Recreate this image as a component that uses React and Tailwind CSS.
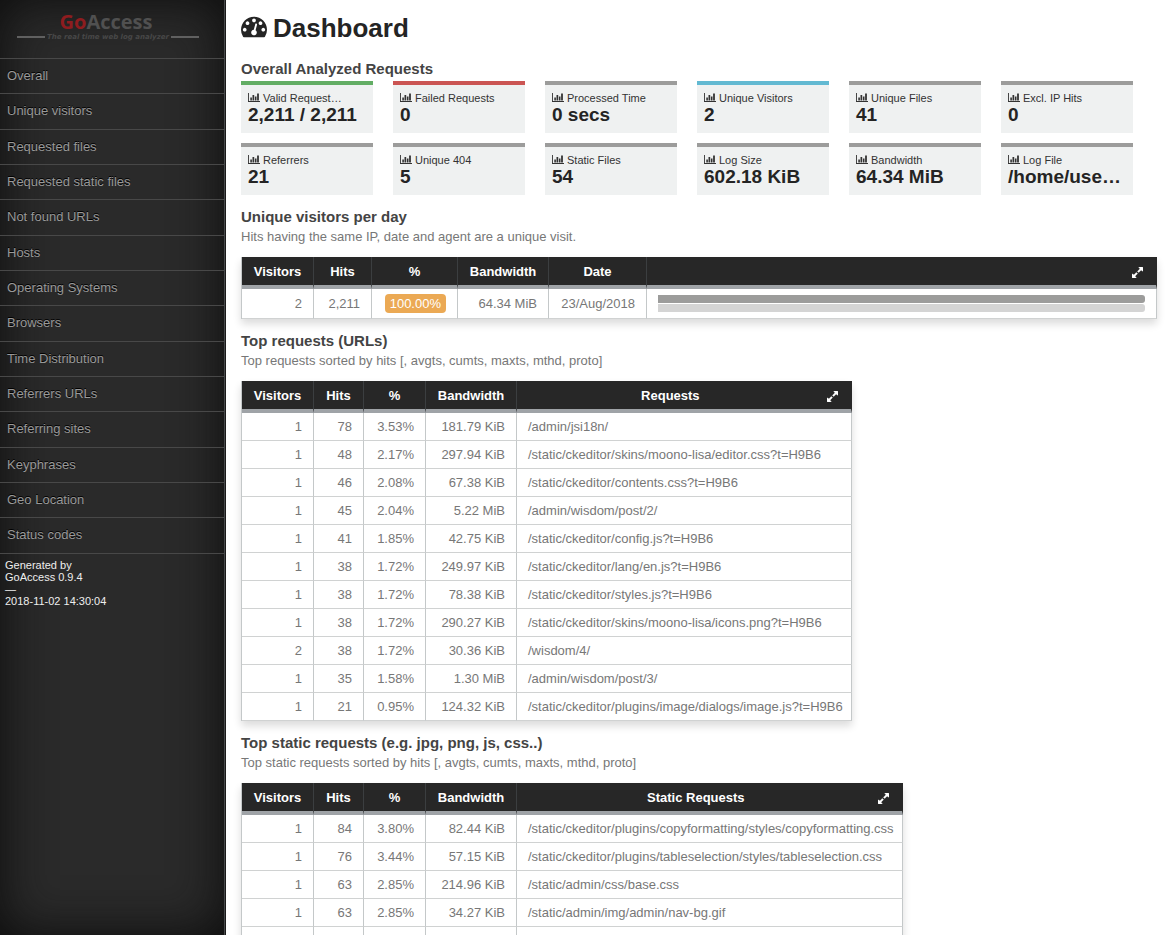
const NAV = [
  "Overall",
  "Unique visitors",
  "Requested files",
  "Requested static files",
  "Not found URLs",
  "Hosts",
  "Operating Systems",
  "Browsers",
  "Time Distribution",
  "Referrers URLs",
  "Referring sites",
  "Keyphrases",
  "Geo Location",
  "Status codes",
];

const STATS = [
  ["Valid Request…", "2,211 / 2,211", "border-[#62ad64]"],
  ["Failed Requests", "0", "border-[#cb5553]"],
  ["Processed Time", "0 secs", "border-[#9c9c9b]"],
  ["Unique Visitors", "2", "border-[#62b9d2]"],
  ["Unique Files", "41", "border-[#9c9c9b]"],
  ["Excl. IP Hits", "0", "border-[#9c9c9b]"],
  ["Referrers", "21", "border-[#9c9c9b]"],
  ["Unique 404", "5", "border-[#9c9c9b]"],
  ["Static Files", "54", "border-[#9c9c9b]"],
  ["Log Size", "602.18 KiB", "border-[#9c9c9b]"],
  ["Bandwidth", "64.34 MiB", "border-[#9c9c9b]"],
  ["Log File", "/home/use…", "border-[#9c9c9b]"],
];

const REQUESTS = [
  ["1", "78", "3.53%", "181.79 KiB", "/admin/jsi18n/"],
  ["1", "48", "2.17%", "297.94 KiB", "/static/ckeditor/skins/moono-lisa/editor.css?t=H9B6"],
  ["1", "46", "2.08%", "67.38 KiB", "/static/ckeditor/contents.css?t=H9B6"],
  ["1", "45", "2.04%", "5.22 MiB", "/admin/wisdom/post/2/"],
  ["1", "41", "1.85%", "42.75 KiB", "/static/ckeditor/config.js?t=H9B6"],
  ["1", "38", "1.72%", "249.97 KiB", "/static/ckeditor/lang/en.js?t=H9B6"],
  ["1", "38", "1.72%", "78.38 KiB", "/static/ckeditor/styles.js?t=H9B6"],
  ["1", "38", "1.72%", "290.27 KiB", "/static/ckeditor/skins/moono-lisa/icons.png?t=H9B6"],
  ["2", "38", "1.72%", "30.36 KiB", "/wisdom/4/"],
  ["1", "35", "1.58%", "1.30 MiB", "/admin/wisdom/post/3/"],
  ["1", "21", "0.95%", "124.32 KiB", "/static/ckeditor/plugins/image/dialogs/image.js?t=H9B6"],
];

const STATIC_REQUESTS = [
  ["1", "84", "3.80%", "82.44 KiB", "/static/ckeditor/plugins/copyformatting/styles/copyformatting.css"],
  ["1", "76", "3.44%", "57.15 KiB", "/static/ckeditor/plugins/tableselection/styles/tableselection.css"],
  ["1", "63", "2.85%", "214.96 KiB", "/static/admin/css/base.css"],
  ["1", "63", "2.85%", "34.27 KiB", "/static/admin/img/admin/nav-bg.gif"],
  ["", "", "", "", ""],
];

function GaugeIcon() {
  return (
    <svg viewBox="0 0 1792 1792" className="mb-1 size-[26px] shrink-0" fill="currentColor" aria-hidden="true">
      <path d="M384 1152q0-53-37.5-90.5t-90.5-37.5-90.5 37.5-37.5 90.5 37.5 90.5 90.5 37.5 90.5-37.5 37.5-90.5zm192-448q0-53-37.5-90.5t-90.5-37.5-90.5 37.5-37.5 90.5 37.5 90.5 90.5 37.5 90.5-37.5 37.5-90.5zm428 481l101-382q6-26-7.5-48.5t-38.5-29.5-48 6.5-30 39.5l-101 382q-60 5-107 43.5t-63 98.5q-20 77 20 146t117 89 146-20 89-117q16-60-6-117t-72-91zm660-33q0-53-37.5-90.5t-90.5-37.5-90.5 37.5-37.5 90.5 37.5 90.5 90.5 37.5 90.5-37.5 37.5-90.5zm-640-640q0-53-37.5-90.5t-90.5-37.5-90.5 37.5-37.5 90.5 37.5 90.5 90.5 37.5 90.5-37.5 37.5-90.5zm448 192q0-53-37.5-90.5t-90.5-37.5-90.5 37.5-37.5 90.5 37.5 90.5 90.5 37.5 90.5-37.5 37.5-90.5zm320 448q0 261-141 483-19 29-54 29h-1402q-35 0-54-29-141-221-141-483 0-182 71-348t191-286 286-191 348-71 348 71 286 191 191 286 71 348z" />
    </svg>
  );
}

function ChartIcon() {
  return (
    <svg viewBox="0 0 12 10" className="mb-[2px] h-[10px] w-3 shrink-0" fill="currentColor" aria-hidden="true">
      <path d="M0 1h.9v8.1H12v.9H0zM2.3 5.6h1.6v2.9H2.3zM4.5 3h1.7v5.5H4.5zM6.9 4.4h1.6v4.1H6.9zM9.1 1.4h1.8v7.1H9.1z" />
    </svg>
  );
}

function ExpandIcon() {
  return (
    <svg viewBox="128 128 1536 1536" className="size-[11px]" fill="currentColor" aria-hidden="true">
      <path d="M883 1056q0 13-10 23l-332 332 144 144q19 19 19 45t-19 45-45 19h-448q-26 0-45-19t-19-45v-448q0-26 19-45t45-19 45 19l144 144 332-332q10-10 23-10t23 10l114 114q10 10 10 23zm781-864v448q0 26-19 45t-45 19-45-19l-144-144-332 332q-10 10-23 10t-23-10l-114-114q-10-10-10-23t10-23l332-332-144-144q-19-19-19-45t19-45 45-19h448q26 0 45 19t19 45z" stroke="currentColor" strokeWidth="70" />
    </svg>
  );
}

function Sidebar() {
  return (
    <aside className="w-[226px] shrink-0 border-r border-[#1a1a1a] bg-[#2a2a2a]">
      <div className="min-h-full border-r border-[#484a4c] pb-8 shadow-[inset_0_0_50px_#0c0c0c]">
        <div className="flex h-[58px] flex-col items-center pt-[11px] pr-2">
          <div className="pr-1 font-['Open_Sans',sans-serif] text-[20px] leading-[22px] font-bold text-[#505050]">
            <span className="text-[#8e1c1f]">Go</span>Access
          </div>
          <div className="flex items-center gap-[2px] font-['DejaVu_Sans',sans-serif] text-[7px] leading-[8px] font-bold whitespace-nowrap text-[#474747] italic">
            <span className="h-[2px] w-7 bg-[#606060]" />
            The real time web log analyzer
            <span className="h-[2px] w-7 bg-[#606060]" />
          </div>
        </div>
        <nav>
          <ul className="border-b border-[#484848]">
            {NAV.map((label, i) => (
              <li key={label} className={i % 3 === 1 ? "h-[36px] border-t border-[#484848]" : "h-[35px] border-t border-[#484848]"}>
                <a href="#" className="block px-[7px] text-[13px] leading-[34px] text-[#999] [text-shadow:0_-1px_0_#000]">
                  {label}
                </a>
              </li>
            ))}
          </ul>
        </nav>
        <p className="px-[5px] pt-[5px] text-[11px] leading-3 text-[#eee]">
          Generated by
          <br />
          GoAccess 0.9.4
          <br />
          —
          <br />
          2018-11-02 14:30:04
        </p>
      </div>
    </aside>
  );
}

function Stat({ label, value, border }) {
  return (
    <div className={"h-[52px] min-w-0 border-t-4 bg-[#eff1f1] px-[7px] pt-[5px] whitespace-nowrap " + border}>
      <div className="flex items-center gap-[3px] text-[11px] leading-4 text-[#333]">
        <ChartIcon />
        <span>{label}</span>
      </div>
      <div className="text-[19px] leading-[18px] font-bold text-[#242424]">{value}</div>
    </div>
  );
}

function Section({ title, subtitle, children }) {
  return (
    <section className="pt-[13px]">
      <h2 className="text-[15px] leading-[18px] font-bold text-[#444]">{title}</h2>
      <p className="pt-[2px] pb-[11px] text-[13px] leading-[18px] text-[#777]">{subtitle}</p>
      {children}
    </section>
  );
}

const TABLE = "border-separate border-spacing-0 border-l border-[#c4c8c9] text-[13px] text-[#777] shadow-[0_5px_8px_rgba(0,0,0,0.14)]";
const TH = "h-8 border-r border-b-4 border-r-[#3b3e40] border-b-[#9fa3a7] bg-[#272727] px-[11px] pt-[2px] text-center font-bold text-white last:border-r-[#272727] last:pr-[13px]";
const TD = "h-7 border-r border-b border-r-[#c4c8c9] border-b-[#d0d2d2] px-[11px] text-right whitespace-nowrap";

function ExpandButton() {
  return (
    <button type="button" aria-label="Expand" className="block text-white">
      <ExpandIcon />
    </button>
  );
}

function RequestTable({ heading, rows }) {
  return (
    <table className={TABLE}>
      <thead>
        <tr>
          <th className={TH + " w-[72px]"}>Visitors</th>
          <th className={TH + " w-[50px]"}>Hits</th>
          <th className={TH + " w-[62px]"}>%</th>
          <th className={TH + " w-[91px]"}>Bandwidth</th>
          <th className={TH}>
            <div className="flex items-center">
              <span className="flex-1 pr-[14px]">{heading}</span>
              <ExpandButton />
            </div>
          </th>
        </tr>
      </thead>
      <tbody>
        {rows.map((row, i) => (
          <tr key={i}>
            {row.map((cell, j) => (
              <td key={j} className={j === 4 ? TD + " pr-2! text-left!" : TD}>
                {cell}
              </td>
            ))}
          </tr>
        ))}
      </tbody>
    </table>
  );
}

export default function App() {
  return (
    <div className="flex h-screen overflow-hidden bg-white font-['Liberation_Sans',Arial,sans-serif]">
      <Sidebar />
      <main className="min-w-0 flex-1 overflow-hidden pr-[13px] pl-[15px]">
        <h1 className="flex items-center gap-[6px] pt-3 text-[26px] leading-8 font-bold text-[#242424]">
          <GaugeIcon />
          Dashboard
        </h1>
        <h2 className="pt-4 pb-[3px] text-[15px] leading-[18px] font-bold text-[#444]">Overall Analyzed Requests</h2>
        <div className="mr-6 grid grid-cols-6 gap-x-5 gap-y-[10px]">
          {STATS.map(([label, value, border]) => (
            <Stat key={label} label={label} value={value} border={border} />
          ))}
        </div>

        <Section title="Unique visitors per day" subtitle="Hits having the same IP, date and agent are a unique visit.">
          <table className={TABLE + " w-full"}>
            <thead>
              <tr>
                <th className={TH + " w-[72px]"}>Visitors</th>
                <th className={TH + " w-[58px]"}>Hits</th>
                <th className={TH + " w-[86px]"}>%</th>
                <th className={TH + " w-[91px]"}>Bandwidth</th>
                <th className={TH + " w-[98px]"}>Date</th>
                <th className={TH}>
                  <div className="flex justify-end">
                    <ExpandButton />
                  </div>
                </th>
              </tr>
            </thead>
            <tbody>
              <tr className="h-[30px]">
                <td className={TD}>2</td>
                <td className={TD}>2,211</td>
                <td className={TD}>
                  <span className="inline-block rounded-[4px] bg-[#eba954] px-[5px] leading-[19px] text-white">100.00%</span>
                </td>
                <td className={TD}>64.34 MiB</td>
                <td className={TD}>23/Aug/2018</td>
                <td className={TD}>
                  <div className="flex flex-col gap-px">
                    <div className="h-2 rounded-r-[3px] bg-[#9c9c9b]" />
                    <div className="h-2 rounded-r-[3px] bg-[#d4d4d4]" />
                  </div>
                </td>
              </tr>
            </tbody>
          </table>
        </Section>

        <Section title="Top requests (URLs)" subtitle="Top requests sorted by hits [, avgts, cumts, maxts, mthd, proto]">
          <RequestTable heading="Requests" rows={REQUESTS} />
        </Section>

        <Section
          title="Top static requests (e.g. jpg, png, js, css..)"
          subtitle="Top static requests sorted by hits [, avgts, cumts, maxts, mthd, proto]"
        >
          <RequestTable heading="Static Requests" rows={STATIC_REQUESTS} />
        </Section>
      </main>
    </div>
  );
}
